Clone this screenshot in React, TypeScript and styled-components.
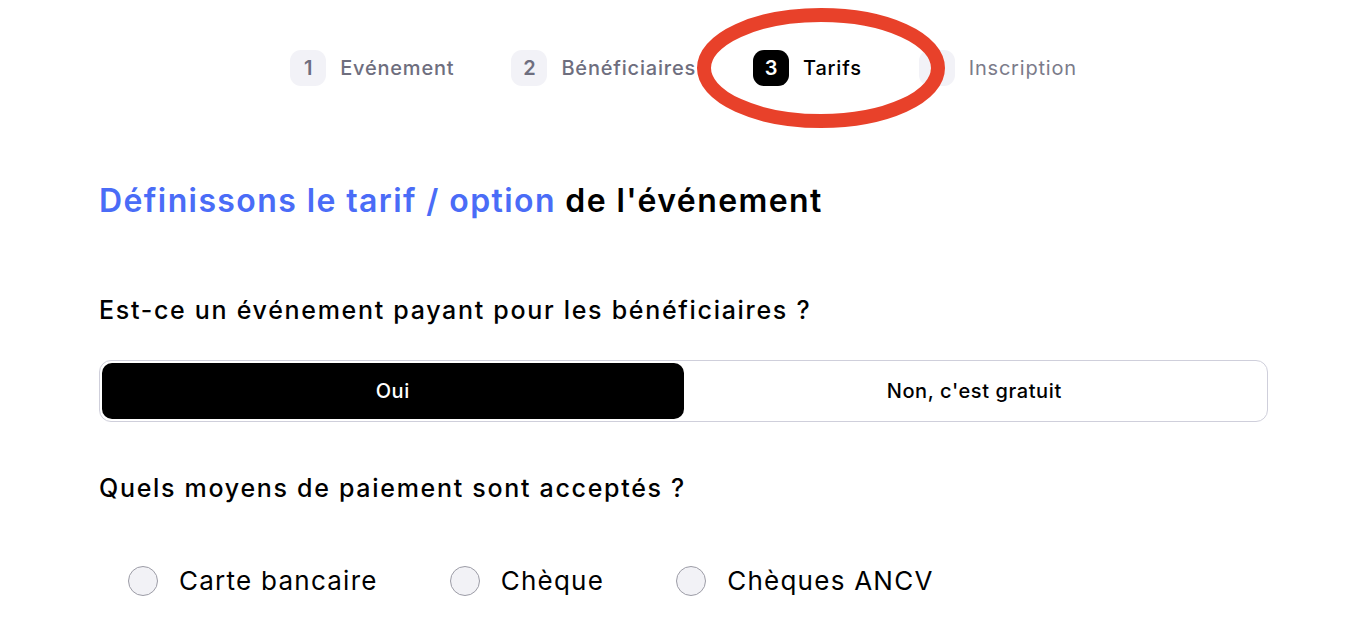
import React from "react";
import styled, { createGlobalStyle } from "styled-components";

const Global = createGlobalStyle`
  html, body { margin: 0; padding: 0; background: #fff; }
  body { font-family: Inter, "Noto Sans", sans-serif; color: #000; }
  * { box-sizing: border-box; }
`;

const Page = styled.div`
  position: relative;
  width: 1368px;
  height: 620px;
  overflow: hidden;
  padding: 0 100px 0 99px;
`;

const Stepper = styled.nav`
  display: flex;
  justify-content: center;
  align-items: center;
  gap: 57px;
  padding-top: 50px;
  height: 86px;
`;

const Step = styled.div`
  display: flex;
  align-items: center;
  gap: 14px;
`;

const Badge = styled.span<{ $active?: boolean }>`
  width: 36px;
  height: 36px;
  border-radius: 11px;
  display: flex;
  align-items: center;
  justify-content: center;
  font-size: 20px;
  font-weight: 600;
  background: ${(p) => (p.$active ? "#000" : "#f2f2f7")};
  color: ${(p) => (p.$active ? "#fff" : "#6e6e7e")};
`;

const StepLabel = styled.span<{ $state: "done" | "active" | "todo" }>`
  font-size: 20px;
  letter-spacing: 0.8px;
  font-weight: ${(p) => (p.$state === "todo" ? 400 : 500)};
  color: ${(p) =>
    p.$state === "active" ? "#000" : p.$state === "done" ? "#6e6e7e" : "#7b7b8a"};
`;

const Annotation = styled.svg`
  position: absolute;
  left: 690px;
  top: 2px;
  pointer-events: none;
`;

const Title = styled.h1`
  margin: 94px 0 0;
  font-size: 32px;
  font-weight: 600;
  letter-spacing: 1.4px;
  line-height: 42px;
`;

const Accent = styled.span`
  color: #4a6cf7;
`;

const Question = styled.h2`
  margin: 0;
  font-size: 25px;
  font-weight: 500;
  letter-spacing: 1.7px;
  line-height: 30px;
`;

const FirstQuestion = styled(Question)`
  margin-top: 73px;
`;

const SecondQuestion = styled(Question)`
  margin-top: 51px;
`;

const Toggle = styled.div`
  margin-top: 35px;
  display: grid;
  grid-template-columns: 1fr 1fr;
  height: 62px;
  padding: 2px;
  border: 1px solid #cfcfdb;
  border-radius: 12px;
`;

const ToggleOption = styled.button<{ $selected?: boolean }>`
  border: none;
  border-radius: 10px;
  font-family: inherit;
  font-size: 20px;
  font-weight: 500;
  letter-spacing: 0.6px;
  background: ${(p) => (p.$selected ? "#000" : "transparent")};
  color: ${(p) => (p.$selected ? "#fff" : "#000")};
`;

const Options = styled.div`
  margin-top: 62px;
  padding-left: 29px;
  display: flex;
  align-items: center;
  gap: 72px;
`;

const Option = styled.label`
  display: flex;
  align-items: center;
  gap: 21px;
  font-size: 26px;
  font-weight: 400;
  letter-spacing: 1.25px;
`;

const Circle = styled.span`
  width: 30px;
  height: 30px;
  border-radius: 50%;
  background: #f2f2f6;
  border: 1px solid #9c9ca6;
`;

export default function App() {
  return (
    <Page>
      <Global />
      <Stepper>
        <Step>
          <Badge>1</Badge>
          <StepLabel $state="done">Evénement</StepLabel>
        </Step>
        <Step>
          <Badge>2</Badge>
          <StepLabel $state="done">Bénéficiaires</StepLabel>
        </Step>
        <Step>
          <Badge $active>3</Badge>
          <StepLabel $state="active">Tarifs</StepLabel>
        </Step>
        <Step>
          <Badge>4</Badge>
          <StepLabel $state="todo">Inscription</StepLabel>
        </Step>
      </Stepper>
      <Annotation width="270" height="132" viewBox="0 0 270 132">
        <ellipse cx="131" cy="66" rx="117" ry="53" fill="none" stroke="#e8412a" strokeWidth="14" />
      </Annotation>
      <Title>
        <Accent>Définissons le tarif / option</Accent> de l'événement
      </Title>
      <FirstQuestion>Est-ce un événement payant pour les bénéficiaires ?</FirstQuestion>
      <Toggle>
        <ToggleOption $selected>Oui</ToggleOption>
        <ToggleOption>Non, c'est gratuit</ToggleOption>
      </Toggle>
      <SecondQuestion>Quels moyens de paiement sont acceptés ?</SecondQuestion>
      <Options>
        <Option>
          <Circle />
          Carte bancaire
        </Option>
        <Option>
          <Circle />
          Chèque
        </Option>
        <Option>
          <Circle />
          Chèques ANCV
        </Option>
      </Options>
    </Page>
  );
}
